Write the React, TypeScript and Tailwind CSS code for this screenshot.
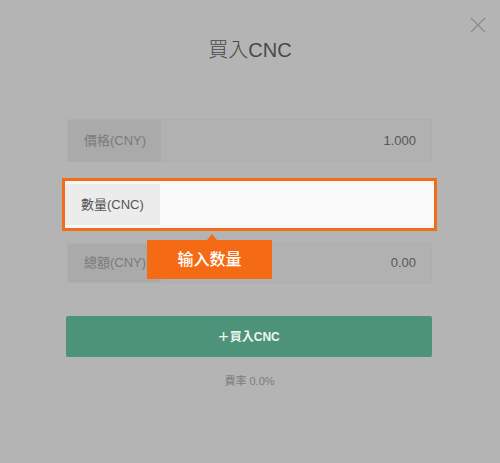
import React from "react";

const font = { fontFamily: '"Liberation Sans", "Noto Sans CJK TC", sans-serif' };

export default function App() {
  return (
    <div className="relative w-[500px] h-[463px] bg-[#b4b4b4] overflow-hidden" style={font}>
      <svg className="absolute left-[470px] top-[17px]" width="16" height="16" viewBox="0 0 16 16">
        <path d="M1 1 L15 15 M15 1 L1 15" stroke="#8c8c8c" strokeWidth="1.3" fill="none" />
      </svg>
      <div className="pt-[36px] h-[64px] text-center text-[20px] leading-[28px] font-light text-[#484848]">買入CNC</div>

      <div className="relative mx-[67px] w-[365px]">
        <div className="mt-[55px] h-[43px] flex border border-[#aeaeae] bg-[#b1b1b1]">
          <div className="w-[93px] bg-[#aaaaaa] flex items-center pl-[16px] text-[13px] text-[#7a7a7a]">價格(CNY)</div>
          <div className="flex-1 flex items-center justify-end pr-[15px] text-[13px] text-[#585858]">1.000</div>
        </div>

        <div className="mt-[16px] -mx-[5px] h-[53px] border-[3px] border-[#f26c1a] bg-[#f7f7f7] flex py-[3px]">
          <div className="w-[95px] bg-[#ececec] flex items-center pl-[16px] text-[13px] text-[#555555]">數量(CNC)</div>
          <div className="flex-1 bg-[#fafafa]" />
        </div>

        <div className="mt-[12px] h-[40px] flex border border-[#aeaeae] bg-[#b1b1b1]">
          <div className="w-[93px] bg-[#aaaaaa] flex items-center pl-[16px] text-[13px] text-[#7a7a7a]">總額(CNY)</div>
          <div className="flex-1 flex items-center justify-end pr-[15px] text-[13px] text-[#585858]">0.00</div>
        </div>

        <div className="absolute left-[80px] top-[121px] w-[125px] h-[39px] bg-[#f56a14] flex items-center justify-center text-white text-[16px] font-medium" style={{ fontFamily: '"Liberation Sans", "Noto Sans CJK SC", sans-serif' }}>
          <div className="absolute left-[60px] -top-[6px] w-0 h-0 border-l-[5px] border-r-[5px] border-b-[6px] border-l-transparent border-r-transparent border-b-[#f56a14]" />
          输入数量
        </div>

        <div className="mt-[33px] h-[41px] -ml-[1px] rounded-[2px] bg-[#4c937a] flex items-center justify-center text-[#eef5f2] text-[12px] font-bold">
          <span className="text-[18px] font-light leading-none mr-[1px]">+</span>買入CNC
        </div>

        <div className="mt-[17px] text-center text-[11px] leading-[14px] text-[#7c7c7c]">費率 0.0%</div>
      </div>
    </div>
  );
}
